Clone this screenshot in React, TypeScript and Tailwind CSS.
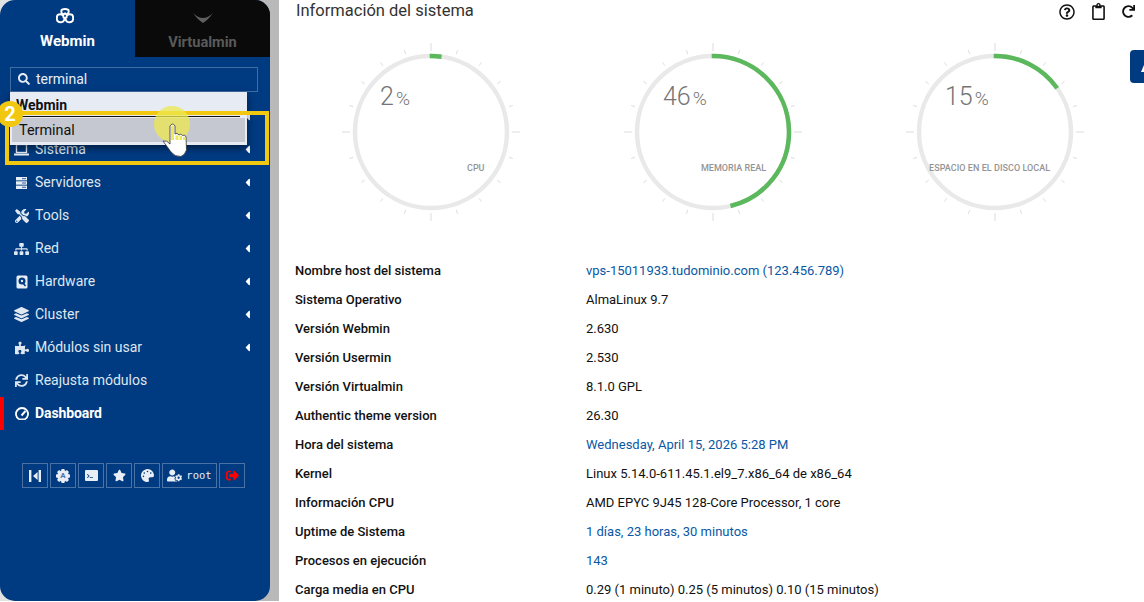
import React from "react";
import { FaSearch, FaTools, FaSitemap, FaLayerGroup, FaPuzzlePiece, FaSync, FaStar, FaPalette, FaUserCog, FaSignOutAlt, FaRegQuestionCircle, FaRegClipboard, FaRedo, FaCaretLeft, FaTerminal } from "react-icons/fa";

const WebminLogo = () => (
  <svg width="18" height="16" viewBox="0 0 20 17" fill="none" stroke="white" strokeWidth="2.2" strokeLinejoin="round" className="mr-[5px]">
    <path d="M6.2 1.8 Q10 -0.2 13.8 1.8 Q14.8 4.8 12.4 7 L10 5.6 L7.6 7 Q5.2 4.8 6.2 1.8Z" />
    <path d="M2 7.2 Q5 5.6 8 7.8 L8.4 10.4 L10 11.2 L8 14.6 Q4.5 16.6 1.6 14 Q0 10.4 2 7.2Z" />
    <path d="M18 7.2 Q15 5.6 12 7.8 L11.6 10.4 L10 11.2 L12 14.6 Q15.5 16.6 18.4 14 Q20 10.4 18 7.2Z" />
  </svg>
);

const LaptopIcon = () => (
  <svg width="15" height="13" viewBox="0 0 15 13" fill="none" stroke="#e8eef6">
    <rect x="2.5" y="1.5" width="10" height="8" strokeWidth="1.4" />
    <path d="M0 11.5h15" strokeWidth="2" />
  </svg>
);

const ServerIcon = () => (
  <svg width="11" height="12" viewBox="0 0 11 12" fill="#e8eef6">
    <rect y="0" width="11" height="3.4" />
    <rect y="4.3" width="11" height="3.4" />
    <rect y="8.6" width="11" height="3.4" />
    <path d="M6 1.7h4M6 6h4M6 10.3h4" stroke="#003a80" strokeWidth="0.8" />
  </svg>
);

const DiskIcon = () => (
  <svg width="12" height="14" viewBox="0 0 12 14">
    <rect x="0.5" y="0.5" width="11" height="13" rx="1.5" fill="#e8eef6" />
    <circle cx="6" cy="6" r="3.5" fill="#003a80" />
    <circle cx="6" cy="6" r="1.2" fill="#e8eef6" />
    <path d="M7 8l2.5 3" stroke="#003a80" strokeWidth="1.5" />
  </svg>
);

const DashIcon = () => (
  <svg width="14" height="14" viewBox="0 0 14 14" fill="none" stroke="white">
    <path d="M4 12.2 A6 6 0 1 1 10 12.2" strokeWidth="1.8" />
    <path d="M4 12.2h6" strokeWidth="1.4" />
    <path d="M6.5 8.5L10.5 4" strokeWidth="2" />
  </svg>
);

const menu = [
  { label: "Servidores", icon: <ServerIcon /> },
  { label: "Tools", icon: <FaTools size={14} /> },
  { label: "Red", icon: <FaSitemap size={16} /> },
  { label: "Hardware", icon: <DiskIcon /> },
  { label: "Cluster", icon: <FaLayerGroup size={15} /> },
  { label: "Módulos sin usar", icon: <FaPuzzlePiece size={14} /> },
];

const rows: [string, string, boolean][] = [
  ["Nombre host del sistema", "vps-15011933.tudominio.com (123.456.789)", true],
  ["Sistema Operativo", "AlmaLinux 9.7", false],
  ["Versión Webmin", "2.630", false],
  ["Versión Usermin", "2.530", false],
  ["Versión Virtualmin", "8.1.0 GPL", false],
  ["Authentic theme version", "26.30", false],
  ["Hora del sistema", "Wednesday, April 15, 2026 5:28 PM", true],
  ["Kernel", "Linux 5.14.0-611.45.1.el9_7.x86_64 de x86_64", false],
  ["Información CPU", "AMD EPYC 9J45 128-Core Processor, 1 core", false],
  ["Uptime de Sistema", "1 días, 23 horas, 30 minutos", true],
  ["Procesos en ejecución", "143", true],
  ["Carga media en CPU", "0.29 (1 minuto) 0.25 (5 minutos) 0.10 (15 minutos)", false],
];

function Gauge({ pct, label, labelClass, valueClass }: { pct: number; label: string; labelClass: string; valueClass: string }) {
  const r = 76;
  const c = 2 * Math.PI * r;
  const ticks = Array.from({ length: 20 }, (_, i) => i * 18);
  return (
    <div className="relative w-[180px] h-[180px]">
      <svg width="180" height="180" viewBox="0 0 180 180">
        {ticks.map((a) => {
          const long = a % 90 === 0;
          const rad = (a * Math.PI) / 180;
          const r1 = long ? 81 : 82;
          const r2 = long ? 89 : 86;
          return (
            <line key={a} x1={90 + r1 * Math.sin(rad)} y1={90 - r1 * Math.cos(rad)} x2={90 + r2 * Math.sin(rad)} y2={90 - r2 * Math.cos(rad)} stroke="#dcdcdc" strokeWidth="1" />
          );
        })}
        <circle cx="90" cy="90" r={r} fill="none" stroke="#e9e9e9" strokeWidth="4.5" />
        <circle cx="90" cy="90" r={r} fill="none" stroke="#5cb85c" strokeWidth="4.5" strokeDasharray={`${(c * (pct + 0.5)) / 100} ${c}`} transform="rotate(-91 90 90)" />
      </svg>
      <div className={`absolute top-[40px] flex items-baseline text-[#757575] font-light ${valueClass}`}>
        <span className="text-[25px] leading-[30px]">{pct}</span>
        <span className="text-[19px] leading-[30px] ml-[2px]">%</span>
      </div>
      <div className={`absolute top-[120px] text-[9px] leading-[12px] font-medium text-[#949494] whitespace-nowrap ${labelClass}`}>{label}</div>
    </div>
  );
}

function ToolBtn({ children, className = "w-[26px]" }: { children: React.ReactNode; className?: string }) {
  return <div className={`h-[25px] border border-[#4a72a5] flex items-center justify-center text-[#e8eef6] ${className}`}>{children}</div>;
}

function Row({ icon, label, caret = true }: { icon: React.ReactNode; label: string; caret?: boolean }) {
  return (
    <div className="h-[33px] flex items-center pl-[14px] pr-[16px]">
      <span className="w-[15px] mr-[6px] flex justify-center">{icon}</span>
      <span className="flex-1">{label}</span>
      {caret && <FaCaretLeft size={13} className="text-white" />}
    </div>
  );
}

const gearTeeth = "M5.6 0h2.8l.4 2h-3.6zM5.6 14h2.8l.4-2h-3.6zM0 5.6v2.8l2 .4v-3.6zM14 5.6v2.8l-2 .4v-3.6z";

export default function App() {
  return (
    <div className="relative flex w-[1144px] h-[602px] overflow-hidden bg-white text-[13px] text-[#111]" style={{ fontFamily: "Roboto, sans-serif" }}>
      <aside className="w-[279px] h-[601px] shrink-0 bg-[linear-gradient(90deg,#e2e2e2_0,#e2e2e2_30px,#b9b9b9_30px)]">
        <div className="w-[270px] h-full rounded-[15px] bg-[#003a80] overflow-hidden flex flex-col">
          <div className="flex h-[57px] shrink-0">
            <div className="w-[135px] flex flex-col items-center pt-[8px] text-white">
              <WebminLogo />
              <div className="text-[15px] font-bold leading-[16px] mt-[9px]">Webmin</div>
            </div>
            <div className="w-[135px] bg-[#0a0a0a] flex flex-col items-center pt-[13px] text-[#5a5a5a]">
              <svg width="20" height="10" viewBox="0 0 20 10"><path d="M0 0 Q5 5 10 5 Q15 5 20 0 Q15 7 10 10 Q5 7 0 0Z" fill="#5f5f5f" /></svg>
              <div className="text-[14.6px] font-bold leading-[16px] mt-[11px]">Virtualmin</div>
            </div>
          </div>
          <div className="ml-[10px] mr-[12px] mt-[10px] h-[25px] border border-[#3f6da3] flex items-center pl-[7px] pb-[1px] text-[#e8eef6] shrink-0">
            <FaSearch size={12} />
            <span className="ml-[6px] text-[14px] leading-[20px]">terminal</span>
          </div>
          <div className="mt-[8px] flex flex-col text-[#dfe7f1] text-[14px]">
            <Row icon={null} label="Webmin" />
            <Row icon={<LaptopIcon />} label="Sistema" />
            {menu.map((m) => (
              <Row key={m.label} icon={m.icon} label={m.label} />
            ))}
            <Row icon={<FaSync size={13} />} label="Reajusta módulos" caret={false} />
            <div className="relative font-bold text-white tracking-[-0.1px]">
              <span className="absolute left-0 top-0 w-[4px] h-[33px] bg-[#ff0000]" />
              <Row icon={<DashIcon />} label="Dashboard" caret={false} />
            </div>
          </div>
          <div className="mt-[33px] ml-[22px] flex gap-[2px]">
            <ToolBtn>
              <svg width="12" height="12" viewBox="0 0 12 12" fill="#e8eef6"><rect x="0" y="0" width="2.4" height="12" /><rect x="9.6" y="0" width="2.4" height="12" /><path d="M8.6 2v8L4 6z" /></svg>
            </ToolBtn>
            <ToolBtn>
              <span className="relative flex items-center justify-center w-[14px] h-[14px]">
                <svg className="absolute inset-0" width="14" height="14" viewBox="0 0 14 14" fill="#e8eef6">
                  <circle cx="7" cy="7" r="5.8" />
                  <path d={gearTeeth} />
                  <path d={gearTeeth} transform="rotate(45 7 7)" />
                </svg>
                <span className="relative text-[8px] leading-[8px] font-bold text-[#4a72a5]">A</span>
              </span>
            </ToolBtn>
            <ToolBtn>
              <span className="w-[13px] h-[11px] bg-[#e8eef6] rounded-[1px] flex items-center pl-[2px] text-[#003a80]"><FaTerminal size={6} /></span>
            </ToolBtn>
            <ToolBtn><FaStar size={13} /></ToolBtn>
            <ToolBtn><FaPalette size={13} /></ToolBtn>
            <ToolBtn className="w-[55px] gap-[4px]">
              <FaUserCog size={15} />
              <span className="text-[10.5px]" style={{ fontFamily: "'DejaVu Sans Mono', monospace" }}>root</span>
            </ToolBtn>
            <ToolBtn><FaSignOutAlt size={13} className="text-[#ff0000]" /></ToolBtn>
          </div>
        </div>
      </aside>

      <main className="flex-1 min-w-0 relative">
        <div className="flex items-center h-[22px] pl-[17px]">
          <h1 className="text-[16.5px] leading-[22px] text-[#333] flex-1 font-normal">Información del sistema</h1>
        </div>
        <div className="absolute top-[3px] right-[9px] flex items-center text-[#111]">
          <FaRegQuestionCircle size={16} />
          <FaRegClipboard size={17} className="ml-[15px]" />
          <FaRedo size={13} className="ml-[15px]" />
        </div>
        <div className="flex gap-[102px] pl-[62px] mt-[20px]">
          <Gauge pct={2} label="CPU" labelClass="left-[126px]" valueClass="left-[39px]" />
          <Gauge pct={46} label="MEMORIA REAL" labelClass="left-[78px]" valueClass="left-[40px]" />
          <Gauge pct={15} label="ESPACIO EN EL DISCO LOCAL" labelClass="left-[24px] tracking-[0.05px]" valueClass="left-[40px]" />
        </div>
        <div className="mt-[34px] pl-[16px] flex flex-col">
          {rows.map(([k, v, link]) => (
            <div key={k} className="h-[29px] flex items-center">
              <div className="w-[291px] font-medium text-[#111]">{k}</div>
              <div className={link ? "text-[#0a57a4]" : "text-[#111]"}>{v}</div>
            </div>
          ))}
        </div>
        <div className="absolute right-0 top-[50px] w-[14px] h-[33px] bg-[#003a80] rounded-l-[4px] overflow-hidden pl-[11px] pt-[15px]">
          <svg width="3" height="7" viewBox="0 0 3 7"><path d="M0 7 L3 0 V7Z" fill="white" /></svg>
        </div>
      </main>

      {/* search results dropdown */}
      <div className="absolute left-[10px] top-[92px] w-[237px] h-[53px] bg-[#e7ebf3] shadow-[0_3px_7px_rgba(0,0,0,0.5)] text-[#111] text-[14px]">
        <div className="h-[24px] pl-[6px] font-bold leading-[26px]">Webmin</div>
        <div className="h-[1px] ml-[1px] mr-[7px] bg-[#111]" />
        <div className="h-[24px] mx-[2px] bg-[#c5c8d0] pl-[7px] text-[14.4px] leading-[26px] mt-[1px]">Terminal</div>
      </div>
      {/* tutorial highlight */}
      <div className="absolute left-[5px] top-[111px] w-[264px] h-[54px] border-[4px] border-[#f1c70f]" />
      <div className="absolute left-[-3px] top-[101px] w-[26px] h-[26px] rounded-full bg-[#f1c70f] text-white text-[20px] leading-none font-bold flex items-center justify-center">2</div>
      <div className="absolute left-[154px] top-[106px] w-[36px] h-[36px] rounded-full bg-[#ece84f]/75" />
      <svg className="absolute left-[160px] top-[122px]" width="28" height="36" viewBox="0 0 28 36">
        <path d="M3 19 Q7 18 10 22 L10 4 Q12.5 0 15 4 L15 12 Q17 10 19 13 Q21 11 22.5 13.5 Q25 12 26 15 L26.5 28 Q25 33 21 34.5 Q15 35 11 30 Z" fill="white" stroke="#333" strokeWidth="0.8" strokeLinejoin="round" />
        <path d="M11 4.5 Q12.5 2 14 4.5 V18 H11Z M15.5 13.5 H18.5 V18 H15.5Z M19.5 14 H22 V18 H19.5Z M23 15 H25.5 V18 H23Z" fill="#eee95a" />
      </svg>
    </div>
  );
}
